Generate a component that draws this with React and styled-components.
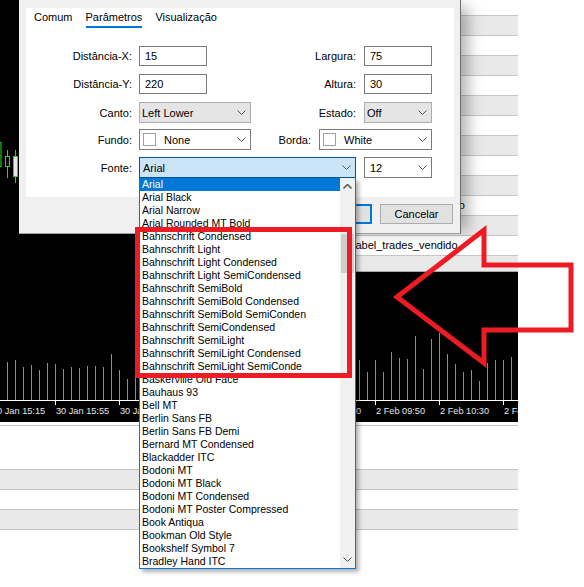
import React from 'react';
import styled, { createGlobalStyle } from 'styled-components';

const GlobalStyle = createGlobalStyle`
  html, body {
    margin: 0;
    padding: 0;
    background: #fff;
  }
  body {
    font-family: "Liberation Sans", Arial, sans-serif;
    color: #000;
  }
`;

const Screen = styled.div`
  position: relative;
  width: 584px;
  height: 587px;
  overflow: hidden;
  background: #fff;
`;

const Workspace = styled.div`
  width: 518px;
  display: flex;
  flex-direction: column;
`;

const TopArea = styled.div`
  display: grid;
  grid-template-columns: 140px 1fr;
  height: 272px;
`;

const ChartStub = styled.div`
  background: #000;
`;

const ObjectTable = styled.div`
  display: flex;
  flex-direction: column;
  height: 272px;
  box-sizing: border-box;
  overflow: hidden;
  border-bottom: 1px solid #a9a9a9;

  & > :first-child {
    margin-top: -5px;
  }
`;

const TableRow = styled.div`
  display: grid;
  grid-template-columns: 213px 1fr;
  flex-shrink: 0;
  height: 20px;
  box-sizing: border-box;
  border-top: 1px solid #c6c6c6;
  background: ${(p) => (p.$shade ? '#e9e9e9' : '#fff')};
  font-size: 11px;
  line-height: 19px;
  white-space: nowrap;
`;

const ChartPanel = styled.div`
  height: 150px;
  background: #000;
  overflow: hidden;
`;

const Terminal = styled.div`
  padding-top: 3px;
`;

const TerminalRow = styled.div`
  height: ${(p) => p.$h}px;
  box-sizing: border-box;
  border-top: 1px solid #c4c4c4;
  background: ${(p) => (p.$shade ? '#e9e9e9' : '#fff')};
`;

const Dialog = styled.div`
  position: absolute;
  left: 19px;
  top: 0;
  width: 442px;
  height: 234px;
  box-sizing: border-box;
  display: flex;
  flex-direction: column;
  padding: 8px 6px 0 7px;
  background: #f0f0f0;
  border-right: 1px solid #6e6e6e;
  border-bottom: 1px solid #a0a0a0;
  box-shadow: 12px 2px 14px -5px rgba(0, 0, 0, 0.3);
  font-size: 11px;
`;

const Panel = styled.div`
  height: 189px;
  flex-shrink: 0;
  background: #fff;
  padding-right: 22px;
`;

const Tabs = styled.div`
  display: flex;
  gap: 13px;
  padding-left: 8px;
  height: 20px;
`;

const Tab = styled.div`
  height: 20px;
  box-sizing: border-box;
  line-height: 18px;
  border-bottom: 2px solid ${(p) => (p.$active ? '#0078d7' : 'transparent')};
`;

const Form = styled.div`
  display: flex;
  flex-direction: column;
  margin-top: 18px;
`;

const Row = styled.div`
  display: flex;
  justify-content: space-between;
  align-items: center;
  height: ${(p) => p.$h}px;
  margin-top: ${(p) => p.$gap}px;
`;

const Group = styled.div`
  display: flex;
  align-items: center;
  gap: ${(p) => p.$gap}px;
`;

const FieldLabel = styled.div`
  width: ${(p) => (p.$w ? `${p.$w}px` : 'auto')};
  text-align: right;
  white-space: nowrap;
`;

const TextInput = styled.div`
  width: 68px;
  height: 20px;
  box-sizing: border-box;
  border: 1px solid #7a7a7a;
  padding-left: 5px;
  line-height: 18px;
  background: #fff;
`;

const selectLook = {
  plain: { bg: '#fff', border: '#7a7a7a' },
  muted: { bg: '#e5e5e5', border: '#adadad' },
  focus: { bg: '#cce4f7', border: '#005499' },
};

const Select = styled.div`
  position: relative;
  display: flex;
  align-items: center;
  gap: 8px;
  width: ${(p) => p.$w}px;
  height: 21px;
  box-sizing: border-box;
  padding: 0 4px 0 ${(p) => p.$pad ?? 2}px;
  border: 1px solid ${(p) => selectLook[p.$look].border};
  background: ${(p) => selectLook[p.$look].bg};
`;

const SelectText = styled.span`
  flex: 1;
  white-space: nowrap;
`;

const Swatch = styled.span`
  width: 13px;
  height: 13px;
  box-sizing: border-box;
  border: 1px solid #a0a0a0;
  background: #fff;
  flex-shrink: 0;
`;

const FontList = styled.div`
  position: absolute;
  z-index: 5;
  left: -1px;
  top: calc(100% + 1px);
  width: 217px;
  height: 391px;
  box-sizing: border-box;
  display: flex;
  background: #fff;
  border: 1px solid #0078d7;
  border-top: none;
  box-shadow: 3px 3px 4px rgba(0, 0, 0, 0.3);
`;

const ListItems = styled.div`
  flex: 1;
  display: flex;
  flex-direction: column;
  overflow: hidden;
`;

const ListItem = styled.div`
  height: 13px;
  flex-shrink: 0;
  line-height: 13px;
  padding-left: 2px;
  font-size: 10.5px;
  white-space: nowrap;
  background: ${(p) => (p.$selected ? '#0078d7' : 'transparent')};
  color: ${(p) => (p.$selected ? '#fff' : '#000')};
`;

const ScrollBar = styled.div`
  width: 15px;
  display: flex;
  flex-direction: column;
  background: #f0f0f0;
`;

const ScrollArrow = styled.div`
  height: 17px;
  display: flex;
  align-items: center;
  justify-content: center;
`;

const ScrollThumb = styled.div`
  height: 39px;
  margin: 39px 1px 0;
  background: #cdcdcd;
`;

const ScrollSpacer = styled.div`
  flex: 1;
`;

const Footer = styled.div`
  display: flex;
  justify-content: flex-end;
  gap: 8px;
  padding: 7px 1px 0 0;
`;

const Button = styled.div`
  width: 73px;
  height: 20px;
  box-sizing: border-box;
  border: ${(p) => (p.$primary ? '2px solid #0078d7' : '1px solid #adadad')};
  background: #e1e1e1;
  text-align: center;
  line-height: ${(p) => (p.$primary ? 16 : 18)}px;
`;

const RedBox = styled.div`
  position: absolute;
  left: 135px;
  top: 227px;
  width: 217px;
  height: 151px;
  box-sizing: border-box;
  border: 5px solid #ed1c24;
  pointer-events: none;
  z-index: 10;
`;

const Overlay = styled.svg`
  position: absolute;
  left: 0;
  top: 0;
  pointer-events: none;
  z-index: 10;
`;

const Chevron = ({ up }) => (
  <svg width="9" height="5" viewBox="0 0 9 5" style={{ flexShrink: 0 }}>
    <polyline
      points={up ? '0.5,4.5 4.5,0.5 8.5,4.5' : '0.5,0.5 4.5,4.5 8.5,0.5'}
      fill="none"
      stroke={up ? '#606060' : '#555'}
      strokeWidth={up ? 1.6 : 1}
    />
  </svg>
);

const fonts = [
  'Arial',
  'Arial Black',
  'Arial Narrow',
  'Arial Rounded MT Bold',
  'Bahnschrift Condensed',
  'Bahnschrift Light',
  'Bahnschrift Light Condensed',
  'Bahnschrift Light SemiCondensed',
  'Bahnschrift SemiBold',
  'Bahnschrift SemiBold Condensed',
  'Bahnschrift SemiBold SemiConden',
  'Bahnschrift SemiCondensed',
  'Bahnschrift SemiLight',
  'Bahnschrift SemiLight Condensed',
  'Bahnschrift SemiLight SemiConde',
  'Baskerville Old Face',
  'Bauhaus 93',
  'Bell MT',
  'Berlin Sans FB',
  'Berlin Sans FB Demi',
  'Bernard MT Condensed',
  'Blackadder ITC',
  'Bodoni MT',
  'Bodoni MT Black',
  'Bodoni MT Condensed',
  'Bodoni MT Poster Compressed',
  'Book Antiqua',
  'Bookman Old Style',
  'Bookshelf Symbol 7',
  'Bradley Hand ITC',
];

const tableRows = [
  '', '', '', '', '', '', '', '', '', '',
  'label_preco_comprado', '', 'label_trades_vendido', '',
];

const volumeTops = [
  362, 360, 367, 365, 370, 363, 364, 369, 367, 368, 366, 366, 367, 354, 370, 379, 365,
  368, 362, 371, 358, 366, 360, 372, 364, 355, 369, 361, 367, 359, 370, 363, 357, 368,
  365, 372, 360, 366, 354, 369, 362, 371, 364, 360,
  360, 372, 360, 372, 352, 358, 359, 336, 369, 339, 333, 354, 364, 372, 370, 381, 363,
  360, 360, 357,
];

const timeLabels = [
  '30 Jan 15:15', '30 Jan 15:55', '30 Jan 16:35', '30 Jan 17:15', '30 Jan 17:55',
  '2 Feb 09:10', '2 Feb 09:50', '2 Feb 10:30', '2 Feb 11:10',
];

const CHART_TOP = 272;
const AXIS_Y = 128;
const VOLUME_GREEN = '#32cd32';

const Candles = () => (
  <svg width="140" height="272" style={{ display: 'block' }}>
    <g stroke="#14e614" strokeWidth="1">
      <rect x="-3.5" y="142.5" width="4.5" height="24" fill="#000" />
      <line x1="7.5" y1="150" x2="7.5" y2="178" />
      <rect x="5.5" y="156.5" width="4" height="10" fill="#000" />
      <line x1="15.5" y1="150" x2="15.5" y2="183" />
      <rect x="13.5" y="156.5" width="4" height="20" fill="#e6e6e6" />
    </g>
  </svg>
);

const VolumeChart = () => (
  <svg width="518" height="150" style={{ display: 'block' }} shapeRendering="crispEdges">
    {volumeTops.map((top, k) => (
      <rect
        key={k}
        x={7 + 8 * k}
        y={top - CHART_TOP}
        width="1"
        height={AXIS_Y - (top - CHART_TOP)}
        fill={VOLUME_GREEN}
      />
    ))}
    <rect x="0" y={AXIS_Y} width="518" height="1" fill="#fff" />
    {timeLabels.map((label, j) => {
      const x = -9 + 64 * j;
      return (
        <g key={label}>
          <rect x={x} y={AXIS_Y} width="1" height="5" fill="#fff" />
          <text
            x={x + 1}
            y={AXIS_Y + 14}
            fill="#e8e8e8"
            fontSize="9.2"
            fontFamily="Liberation Sans, Arial, sans-serif"
            shapeRendering="auto"
          >
            {label}
          </text>
        </g>
      );
    })}
  </svg>
);

const App = () => {
  return (
    <Screen>
      <GlobalStyle />
      <Workspace>
        <TopArea>
          <ChartStub>
            <Candles />
          </ChartStub>
          <ObjectTable>
            {tableRows.map((name, i) => (
              <TableRow key={i} $shade={i % 2 === 1}>
                <span />
                <span>{name}</span>
              </TableRow>
            ))}
          </ObjectTable>
        </TopArea>
        <ChartPanel>
          <VolumeChart />
        </ChartPanel>
        <Terminal>
          <TerminalRow $h={44} />
          <TerminalRow $h={20} $shade />
          <TerminalRow $h={20} />
          <TerminalRow $h={20} $shade />
          <TerminalRow $h={20} />
        </Terminal>
      </Workspace>

      <Dialog>
        <Panel>
          <Tabs>
            <Tab>Comum</Tab>
            <Tab $active>Parâmetros</Tab>
            <Tab>Visualização</Tab>
          </Tabs>
          <Form>
            <Row $h={20} $gap={0}>
              <Group $gap={7}>
                <FieldLabel $w={106}>Distância-X:</FieldLabel>
                <TextInput>15</TextInput>
              </Group>
              <Group $gap={8}>
                <FieldLabel>Largura:</FieldLabel>
                <TextInput>75</TextInput>
              </Group>
            </Row>
            <Row $h={20} $gap={8}>
              <Group $gap={7}>
                <FieldLabel $w={106}>Distância-Y:</FieldLabel>
                <TextInput>220</TextInput>
              </Group>
              <Group $gap={8}>
                <FieldLabel>Altura:</FieldLabel>
                <TextInput>30</TextInput>
              </Group>
            </Row>
            <Row $h={21} $gap={8}>
              <Group $gap={7}>
                <FieldLabel $w={106}>Canto:</FieldLabel>
                <Select $w={112} $look="muted">
                  <SelectText>Left Lower</SelectText>
                  <Chevron />
                </Select>
              </Group>
              <Group $gap={8}>
                <FieldLabel>Estado:</FieldLabel>
                <Select $w={68} $look="muted">
                  <SelectText>Off</SelectText>
                  <Chevron />
                </Select>
              </Group>
            </Row>
            <Row $h={21} $gap={6}>
              <Group $gap={7}>
                <FieldLabel $w={106}>Fundo:</FieldLabel>
                <Select $w={112} $look="plain" $pad={3}>
                  <Swatch />
                  <SelectText>None</SelectText>
                  <Chevron />
                </Select>
              </Group>
              <Group $gap={8}>
                <FieldLabel>Borda:</FieldLabel>
                <Select $w={113} $look="plain" $pad={3}>
                  <Swatch />
                  <SelectText>White</SelectText>
                  <Chevron />
                </Select>
              </Group>
            </Row>
            <Row $h={21} $gap={7}>
              <Group $gap={7}>
                <FieldLabel $w={106}>Fonte:</FieldLabel>
                <Select $w={217} $look="focus" $pad={3}>
                  <SelectText>Arial</SelectText>
                  <Chevron />
                  <FontList>
                    <ListItems>
                      {fonts.map((name, i) => (
                        <ListItem key={name} $selected={i === 0}>
                          {name}
                        </ListItem>
                      ))}
                    </ListItems>
                    <ScrollBar>
                      <ScrollArrow>
                        <Chevron up />
                      </ScrollArrow>
                      <ScrollThumb />
                      <ScrollSpacer />
                      <ScrollArrow>
                        <Chevron />
                      </ScrollArrow>
                    </ScrollBar>
                  </FontList>
                </Select>
              </Group>
              <Select $w={68} $look="plain" $pad={5}>
                <SelectText>12</SelectText>
                <Chevron />
              </Select>
            </Row>
          </Form>
        </Panel>
        <Footer>
          <Button $primary>OK</Button>
          <Button>Cancelar</Button>
        </Footer>
      </Dialog>

      <RedBox />
      <Overlay width="584" height="587">
        <polygon
          points="397,297 484,230 484,265 571,265 571,330 484,330 484,363"
          fill="none"
          stroke="#ed1c24"
          strokeWidth="5"
          strokeLinejoin="miter"
        />
      </Overlay>
    </Screen>
  );
};

export default App;
